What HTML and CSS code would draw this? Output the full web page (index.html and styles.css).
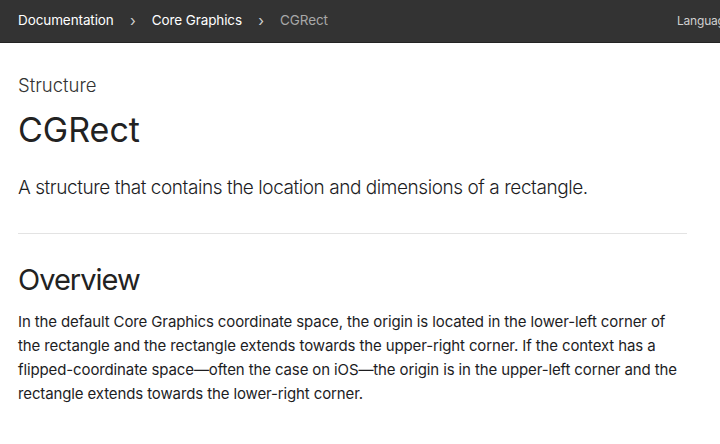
FILE: index.html
```html
<!DOCTYPE html>
<html lang="en">
<head>
<meta charset="utf-8">
<title>CGRect</title>
<link rel="stylesheet" href="styles.css">
</head>
<body>
<nav class="nav">
  <ol class="crumbs">
    <li class="crumb">Documentation</li>
    <li class="sep">›</li>
    <li class="crumb">Core Graphics</li>
    <li class="sep">›</li>
    <li class="crumb current">CGRect</li>
  </ol>
  <div class="lang">Language</div>
</nav>
<main class="main">
  <div class="eyebrow">Structure</div>
  <h1 class="title">CGRect</h1>
  <p class="abstract">A structure that contains the location and dimensions of a rectangle.</p>
  <hr class="divider">
  <h2 class="section">Overview</h2>
  <p class="body">In the default Core Graphics coordinate space, the origin is located in the lower-left corner of the rectangle and the rectangle extends towards the upper-right corner. If the context has a flipped-coordinate space—often the case on iOS—the origin is in the upper-left corner and the rectangle extends towards the lower-right corner.</p>
</main>
</body>
</html>
```
FILE: styles.css
```css
* { box-sizing: border-box; }
html, body { margin: 0; padding: 0; }
body {
  width: 720px;
  height: 444px;
  overflow: hidden;
  background: #fff;
  font-family: Inter, "Liberation Sans", sans-serif;
  color: #1d1d1f;
}
.nav {
  height: 43px;
  background: #333333;
  border-bottom: 1px solid #232323;
  display: flex;
  align-items: center;
  justify-content: space-between;
  padding-left: 18px;
  overflow: hidden;
  white-space: nowrap;
}
.crumbs {
  list-style: none;
  margin: 0 0 2px;
  padding: 0;
  display: flex;
  align-items: center;
  font-size: 13.5px;
  color: #fff;
  letter-spacing: -0.1px;
}
.sep { color: #cfcfcf; width: 38px; text-align: center; font-size: 15px; }
.current { color: #a8a8a8; }
.lang {
  font-size: 12px;
  color: #d0d0d0;
  letter-spacing: -0.2px;
  margin-right: -10px;
  margin-bottom: 2px;
  width: 53px;
  overflow: hidden;
}
.main { padding: 0 33px 0 18px; }
.eyebrow {
  font-size: 18.5px;
  font-weight: 300;
  color: #333;
  margin-top: 31px;
  line-height: 22px;
}
.title {
  font-size: 34px;
  font-weight: 400;
  margin: 14px 0 0;
  line-height: 40px;
  letter-spacing: 0;
  color: #222;
}
.abstract {
  font-size: 19px;
  font-weight: 300;
  margin: 25px 0 0;
  line-height: 26px;
  letter-spacing: -0.44px;
  color: #1d1d1f;
}
.divider {
  border: 0;
  border-top: 1px solid #e3e3e3;
  margin: 32px 0 0;
  height: 0;
}
.section {
  font-size: 29px;
  font-weight: 400;
  margin: 29px 0 0;
  line-height: 34px;
  letter-spacing: -1px;
  color: #222;
}
.body {
  font-size: 15px;
  line-height: 24px;
  margin: 13px 0 0;
  letter-spacing: -0.12px;
  color: #1d1d1f;
}
```
